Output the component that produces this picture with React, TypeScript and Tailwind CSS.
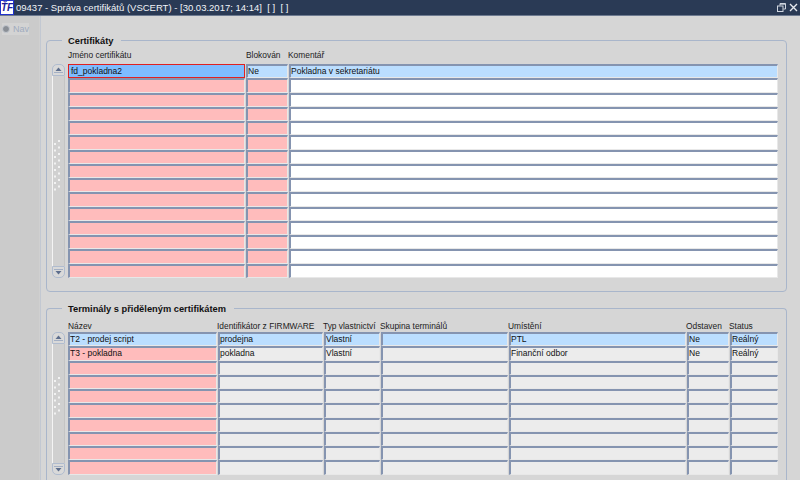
const FONT = "font-['Liberation_Sans',Arial,sans-serif]";

const certCols = ["w-[177px]", "w-[42px]", "w-[489px]"];
const termCols = ["w-[149px]", "w-[105px]", "w-[56px]", "w-[127px]", "w-[177px]", "w-[42px]", "w-[48px]"];

function Cell({ w, bg, text }: { w: string; bg: string; text?: string }) {
  return (
    <div
      className={`${w} ${bg} h-full shrink-0 border-t-2 border-l-2 border-b border-r border-t-[#8594b0] border-l-[#8594b0] border-b-[#e8e8e8] border-r-[#e8e8e8] text-[8.5px] leading-[11px] text-[#111] overflow-hidden whitespace-nowrap`}
    >
      {text}
    </div>
  );
}

function Arrow({ down }: { down?: boolean }) {
  return (
    <div className={`w-[13px] h-[12px] shrink-0 flex items-center justify-center border border-[#b0bccf] bg-[#d9d9d9] ${down ? "rounded-b-[5px] rounded-t-[1px]" : "rounded-t-[5px] rounded-b-[1px]"}`}>
      <svg width="9" height="6" viewBox="0 0 9 6">
        {down ? (
          <>
            <rect x="0" y="0" width="9" height="1" fill="#a3afc4" />
            <path d="M1.5 2h6L4.5 5.5z" fill="#5d6e8d" />
          </>
        ) : (
          <>
            <path d="M1.5 4h6L4.5.5z" fill="#5d6e8d" />
            <rect x="0" y="5" width="9" height="1" fill="#a3afc4" />
          </>
        )}
      </svg>
    </div>
  );
}

function Scrollbar({ rows, trackPad }: { rows: number; trackPad: string }) {
  return (
    <div className="w-[13px] h-full shrink-0 flex flex-col">
      <Arrow />
      <div className={`flex-1 w-full border-l border-l-[#f4f4f4] border-r border-r-[#c4c4c4] bg-[#d0d0d0] flex flex-col justify-center ${trackPad}`}>
        <svg width="10" height={rows * 6.5} viewBox={`0 0 10 ${rows * 6.5}`}>
          {Array.from({ length: rows }).map((_, i) => (
            <g key={i} fill="#f2f2f2">
              <rect x="5" y={i * 6.5} width="2" height="2" />
              <rect x="1" y={i * 6.5 + 3} width="2" height="2" />
            </g>
          ))}
        </svg>
      </div>
      <Arrow down />
    </div>
  );
}

function Group({ title, legendW, children, open }: { title: string; legendW: string; children: React.ReactNode; open?: boolean }) {
  return (
    <section className={`relative w-[741px] shrink-0 border border-[#a9b6cb] rounded-[4px] ${open ? "h-[200px] border-b-0 rounded-b-none" : "h-[252px]"}`}>
      <div className={`absolute left-[15px] top-[-6px] ${legendW} px-[6px] bg-[#d6d6d6] text-[9.3px] leading-[12px] font-bold text-[#111] whitespace-nowrap`}>
        {title}
      </div>
      {children}
    </section>
  );
}

export default function App() {
  const certRows = Array.from({ length: 14 });
  const termRows = Array.from({ length: 8 });
  return (
    <div className={`${FONT} w-[800px] h-[480px] overflow-hidden flex flex-col bg-[#d6d6d6]`}>
      <header className="h-[16px] shrink-0 bg-[#2a3a55] border-b border-b-[#6d7a90] flex items-center">
        <div className="w-[14px] h-[15px] bg-white border border-[#2233cc] flex items-center justify-center text-[10px] leading-none font-bold italic text-[#1a1a9a]">
          ŤF
        </div>
        <div className="ml-[2px] text-[9.5px] leading-[14px] text-[#f2f4f8] whitespace-nowrap">
          09437 - Správa certifikátů (VSCERT) - [30.03.2017; 14:14]&nbsp; [ ]&nbsp; [ ]
        </div>
        <div className="ml-auto mr-[2px] flex items-center gap-[3px]">
          <svg width="9" height="9" viewBox="0 0 9 9" fill="none" stroke="#cfd5df">
            <rect x="0.5" y="3" width="5.5" height="5.5" />
            <path d="M3 2.5V.5h5.5v5.5h-2M3 1.2h5.5" />
          </svg>
          <svg width="9" height="9" viewBox="0 0 9 9" fill="none" stroke="#e6e9ee" strokeWidth="1.4">
            <path d="M1 1l7 7M8 1L1 8" />
          </svg>
        </div>
      </header>

      <div className="flex-1 flex min-h-0">
        <aside className="w-[39px] shrink-0 bg-[#cbcbcb] pl-[2px] pt-[7px]">
          <div className="h-[12px] w-[27px] bg-[#d3d3d3] flex items-center gap-[3px] text-[9px] leading-[12px] text-[#a0abbe]">
            <span className="w-[8px] h-[8px] rounded-full bg-[#8a8f96] border border-[#c4c9d0] shrink-0" />
            Nav
          </div>
        </aside>
        <div className="w-[2px] shrink-0 bg-[#d0d0d0] border-r border-r-[#c2c8d2]" />

        <main className="flex-1 pl-[5px] pt-[24px] flex flex-col gap-[16px] min-h-0">
          <Group title="Certifikáty" legendW="w-[59px]">
            <div className="pl-[21px] pt-[9px] flex text-[8.4px] leading-[11px] text-[#222] h-[21px] whitespace-nowrap">
              <div className="w-[178px]">Jméno certifikátu</div>
              <div className="w-[42px]">Blokován</div>
              <div>Komentář</div>
            </div>
            <div className="pl-[5px] pt-[2px] flex gap-[3px] h-[216px]">
              <Scrollbar rows={8} trackPad="pb-[11px]" />
              <div className="flex flex-col">
                <div className="h-[14.25px] flex gap-px">
                  <div className={`${certCols[0]} h-full shrink-0 border border-[#e02020] bg-[#7ebcff] pl-[2px] text-[8.5px] leading-[12px] text-[#111]`}>
                    fd_pokladna2
                  </div>
                  <Cell w={certCols[1]} bg="bg-[#bbdeff]" text="Ne" />
                  <Cell w={certCols[2]} bg="bg-[#bbdeff]" text="Pokladna v sekretariátu" />
                </div>
                {certRows.map((_, i) => (
                  <div key={i} className="h-[14.25px] flex gap-px">
                    <Cell w={certCols[0]} bg="bg-[#ffbcbc]" />
                    <Cell w={certCols[1]} bg="bg-[#ffbcbc]" />
                    <Cell w={certCols[2]} bg="bg-white" />
                  </div>
                ))}
              </div>
            </div>
          </Group>

          <Group title="Terminály s přiděleným certifikátem" legendW="w-[172px]" open>
            <div className="pl-[21px] pt-[12px] flex text-[8.4px] leading-[11px] text-[#222] h-[23px] whitespace-nowrap">
              <div className="w-[149px]">Název</div>
              <div className="w-[106px]">Identifikátor z FIRMWARE</div>
              <div className="w-[57px]">Typ vlastnictví</div>
              <div className="w-[128px]">Skupina terminálů</div>
              <div className="w-[178px]">Umístění</div>
              <div className="w-[43px]">Odstaven</div>
              <div>Status</div>
            </div>
            <div className="pl-[5px] flex gap-[3px] h-[143px]">
              <Scrollbar rows={6} trackPad="pb-[14px]" />
              <div className="flex flex-col">
                <div className="h-[14.25px] flex gap-px">
                  {["T2 - prodej script", "prodejna", "Vlastní", "", "PTL", "Ne", "Reálný"].map((t, i) => (
                    <Cell key={i} w={termCols[i]} bg="bg-[#bbdeff]" text={t} />
                  ))}
                </div>
                <div className="h-[14.25px] flex gap-px">
                  {["T3 - pokladna", "pokladna", "Vlastní", "", "Finanční odbor", "Ne", "Reálný"].map((t, i) => (
                    <Cell key={i} w={termCols[i]} bg={i === 0 ? "bg-[#ffbcbc]" : "bg-[#ececec]"} text={t} />
                  ))}
                </div>
                {termRows.map((_, r) => (
                  <div key={r} className="h-[14.25px] flex gap-px">
                    {termCols.map((w, i) => (
                      <Cell key={i} w={w} bg={i === 0 ? "bg-[#ffbcbc]" : "bg-[#ececec]"} />
                    ))}
                  </div>
                ))}
              </div>
            </div>
          </Group>
        </main>
      </div>
    </div>
  );
}
